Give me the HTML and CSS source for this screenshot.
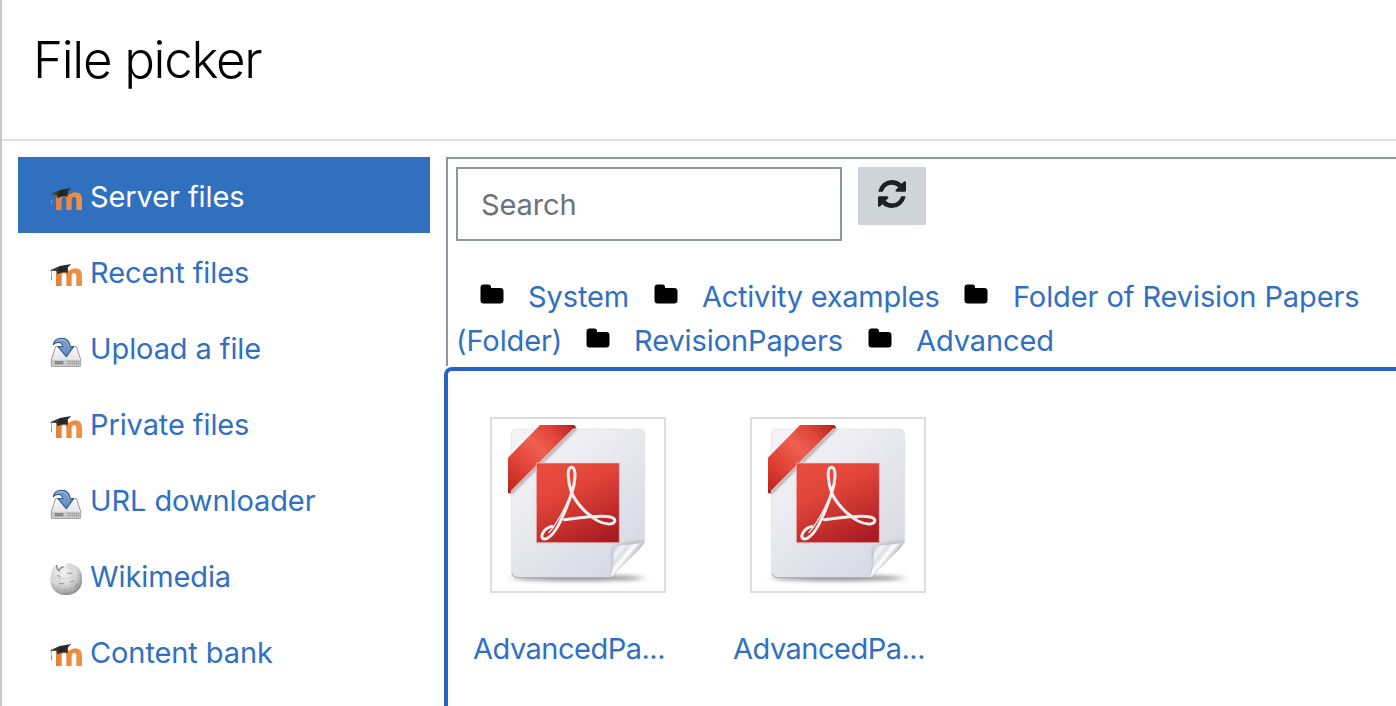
FILE: index.html
```html
<!DOCTYPE html>
<html lang="en">
<head>
<meta charset="utf-8">
<title>File picker</title>
<link rel="stylesheet" href="styles.css">
</head>
<body>
<svg class="defs" aria-hidden="true">
  <defs>
    <linearGradient id="capFill" x1="0" y1="0" x2="1" y2="0"><stop offset="0" stop-color="#555"/><stop offset=".5" stop-color="#222"/><stop offset="1" stop-color="#333"/></linearGradient>
    <linearGradient id="mFill" x1="0" y1="0" x2="1" y2="0"><stop offset="0" stop-color="#e67f3c"/><stop offset="1" stop-color="#ee9342"/></linearGradient>
    <linearGradient id="drive" x1="0" y1="0" x2="0" y2="1"><stop offset="0" stop-color="#fff"/><stop offset="1" stop-color="#d4d4d4"/></linearGradient>
    <linearGradient id="arrow" x1="0" y1="0" x2="1" y2="1"><stop offset="0" stop-color="#89abd5"/><stop offset="1" stop-color="#5f86bb"/></linearGradient>
    <radialGradient id="globe" cx=".4" cy=".3" r=".7"><stop offset="0" stop-color="#f2f2f2"/><stop offset=".6" stop-color="#d6d6d6"/><stop offset="1" stop-color="#8d8d8d"/></radialGradient>
    <linearGradient id="paper" x1="0" y1="0" x2=".8" y2="1"><stop offset="0" stop-color="#f5f5f8"/><stop offset=".4" stop-color="#ebebf1"/><stop offset="1" stop-color="#d6d7e3"/></linearGradient>
    <linearGradient id="red" x1=".2" y1="0" x2=".7" y2="1"><stop offset="0" stop-color="#e84c3d"/><stop offset=".35" stop-color="#e14438"/><stop offset="1" stop-color="#ab1e24"/></linearGradient>
    <linearGradient id="ribbon" gradientUnits="userSpaceOnUse" x1="90" y1="240" x2="270" y2="60"><stop offset="0" stop-color="#c22a23"/><stop offset=".25" stop-color="#e04335"/><stop offset=".55" stop-color="#ed6052"/><stop offset=".8" stop-color="#df4337"/><stop offset="1" stop-color="#bd2722"/></linearGradient>
    <linearGradient id="curl" gradientUnits="userSpaceOnUse" x1="395" y1="425" x2="448" y2="468"><stop offset="0" stop-color="#b9babf"/><stop offset=".35" stop-color="#f4f4f6"/><stop offset=".55" stop-color="#dedfe3"/><stop offset=".75" stop-color="#fff"/><stop offset="1" stop-color="#bcbcc2"/></linearGradient>
    <filter id="soft" x="-20%" y="-200%" width="140%" height="500%"><feGaussianBlur stdDeviation="14 7"/></filter>
    <filter id="edge" x="-10%" y="-10%" width="120%" height="120%"><feGaussianBlur stdDeviation="3"/></filter>
    <filter id="grain" x="-5%" y="-5%" width="110%" height="110%"><feGaussianBlur stdDeviation="1.6"/></filter>
  </defs>
  <symbol id="moodle" viewBox="60 267 96 96">
    <path fill="url(#mFill)" d="M78 348V312q0-15 16-17 16-2 23 8 8-8 18-8 21 0 21 21v32h-17v-31q0-8-6.500-8-7.500 0-7.500 9v30h-16v-31q0-8-6.500-8-7.500 0-7.500 9v30z"/>
    <path fill="url(#capFill)" d="M61 300l29-12 34-6-10 10-1 17q-12-6-31 4l-3-10-14-1v4z"/>
    <path fill="none" stroke="#666" stroke-width="1.5" d="M65 301q-2 9 0 20"/><path stroke="#b9826a" stroke-width="3" d="M64.500 318v13"/>
  </symbol>
  <symbol id="download" viewBox="60 45 96 96">
    <path fill="url(#drive)" stroke="#666" stroke-width="2" stroke-linejoin="round" d="M77 80h62l13 38v19q0 2-2 2H66q-2 0-2-2v-19z"/>
    <path fill="#c9c9c9" d="M66 118h85v19H66z"/><path fill="none" stroke="#fff" stroke-width="2" d="M66 117h84"/>
    <path fill="#888" d="M74 123h26v10H74z"/><path stroke="#858585" stroke-width="2" d="M115 122v12m6-12v12m6-12v12m6-12v12m6-12v12m6-12v12"/>
    <path fill="url(#arrow)" stroke="#335d95" stroke-width="3.500" stroke-linejoin="round" d="M70 74q3-19 25-19 23 0 25 25h11l-22 30-25-30h14q-1-12-11-13-9-1-17 7z"/>
    <path fill="none" stroke="#b8cdea" stroke-width="2" d="M77 66q8-8 18-8 18 0 22 24"/>
  </symbol>
  <symbol id="wiki" viewBox="60 39 96 96">
    <path fill="url(#globe)" d="M64 66q5-17 15-22l7 10 8-8 9 5 10-12q31 3 41 30 9 29-8 50-14 16-38 16-28 0-41-22-9-16-5-34z"/>
    <path fill="none" stroke="#8a8a8a" stroke-width="4" stroke-linecap="round" d="M80 46q1 14 7 16 5-10 13-12"/>
    <g fill="none" stroke="#c3c3c3" stroke-width="1.500"><path d="M64 80q45 15 90-8M66 103q40 14 88-8M91 60q-7 40 6 73M117 43q24 42 9 88M75 120q36 8 65-4"/></g>
    <g stroke="#a0a0a0" stroke-width="4" stroke-linecap="round"><path d="M83 77l7 2m24-10l10 1m-36 31h13m21-5l9-4m-28 29l5 1m30-15l5-5"/></g>
  </symbol>
  <symbol id="folder" viewBox="0 0 24 20"><path d="M3.500.5h4.800q2.700 0 2.700 2.700v.7h9.200q3.300 0 3.300 3.200v9.200q0 3.200-3.300 3.200H3.600Q.5 19.500.5 16.300V3.700Q.5.500 3.500.5z"/></symbol>
  <symbol id="pdf" viewBox="36 42 516 516">
    <ellipse cx="294" cy="519" rx="195" ry="9" fill="#555" opacity=".65" filter="url(#soft)"/>
    <g filter="url(#grain)">
      <path fill="url(#paper)" stroke="#dfe0e7" stroke-width="2" d="M111 72H477q17 0 17 17V410L394 517H111q-17 0-17-17V89q0-17 17-17z"/>
      <path fill="none" stroke="#a9a9b0" stroke-width="3" d="M96 506q4 12 15 12H394"/>
      <path fill="none" stroke="#77777f" stroke-width="6" opacity=".4" filter="url(#edge)" d="M394 515q12-42 4-80 6-18 94-24"/>
      <path fill="url(#curl)" d="M391 517q14-44 8-87 0-9 11-9 58 1 84-13-4 13-15 24l-73 72q-7 8-15 13z"/>
      <path fill="none" stroke="#555" stroke-width="8" opacity=".45" filter="url(#edge)" d="M92 266L288 70"/>
      <path fill="url(#ribbon)" d="M180 60H278q9 0 9 10H280L92 258v6H84V158z"/>
      <path fill="#a82220" d="M278 60q9 0 9 10H278l-5-6zM84 250l8 8v7h-8z"/>
      <path fill="url(#red)" stroke="#f0c4c6" stroke-width="2" d="M169 174H418V413H169z"/>
      <g fill="none" stroke="#f6eeee" stroke-linecap="round" stroke-linejoin="round">
        <path stroke-width="9" d="M275 264C264 232 259 188 274 187C291 186 286 235 275 264C257 318 226 401 193 402C178 401 186 372 215 364"/>
        <path stroke-width="9" d="M275 264C292 300 341 355 386 357C407 357 412 341 391 336C360 329 306 338 253 344"/>
        <path stroke-width="4" d="M270 274C249 323 225 362 207 383M280 277C298 305 327 328 348 340"/>
      </g>
    </g>
  </symbol>
</svg>
<div class="dialog">
  <header class="header"><h1 class="title">File picker</h1></header>
  <main class="body">
    <nav class="repos">
      <a class="repo active"><svg><use href="#moodle"/></svg><span>Server files</span></a>
      <a class="repo"><svg><use href="#moodle"/></svg><span>Recent files</span></a>
      <a class="repo"><svg><use href="#download"/></svg><span>Upload a file</span></a>
      <a class="repo"><svg><use href="#moodle"/></svg><span>Private files</span></a>
      <a class="repo"><svg><use href="#download"/></svg><span>URL downloader</span></a>
      <a class="repo"><svg><use href="#wiki"/></svg><span>Wikimedia</span></a>
      <a class="repo"><svg><use href="#moodle"/></svg><span>Content bank</span></a>
    </nav>
    <section class="panel">
      <div class="top">
        <div class="toolbar">
          <input class="search" type="text" placeholder="Search">
          <button class="refresh" aria-label="Refresh"><svg viewBox="0 0 1536 1536"><path d="M1511 928q0 5-1 7-64 268-268 434.500T764 1536q-146 0-282.500-55T238 1324l-129 129q-19 19-45 19t-45-19-19-45V960q0-26 19-45t45-19h448q26 0 45 19t19 45-19 45l-137 137q71 66 161 102t187 36q134 0 250-65t186-179q11-17 53-117 8-23 30-23h192q13 0 22.500 9.500t9.500 22.500zm25-800v448q0 26-19 45t-45 19h-448q-26 0-45-19t-19-45 19-45l138-138Q969 256 768 256q-134 0-250 65T332 500q-11 17-53 117-8 23-30 23H50q-13 0-22.500-9.500T18 608v-7q65-268 270-434.500T768 0q146 0 284 55.500T1297 212l130-129q19-19 45-19t45 19 19 45z"/></svg></button>
        </div>
        <div class="path">
          <div class="path-line"><svg><use href="#folder"/></svg><a class="c-system">System</a><svg><use href="#folder"/></svg><a class="c-activity">Activity examples</a><svg><use href="#folder"/></svg><a class="c-revision">Folder of Revision Papers</a></div>
          <div class="path-line"><a class="c-folder">(Folder)</a><svg><use href="#folder"/></svg><a class="c-papers">RevisionPapers</a><svg><use href="#folder"/></svg><a>Advanced</a></div>
        </div>
      </div>
      <div class="files">
        <a class="file"><div class="thumb"><svg><use href="#pdf"/></svg></div><span>AdvancedPa...</span></a>
        <a class="file"><div class="thumb"><svg><use href="#pdf"/></svg></div><span>AdvancedPa...</span></a>
      </div>
    </section>
  </main>
</div>
</body>
</html>
```

FILE: styles.css
```css
* { box-sizing: border-box; }
body { margin: 0; background: #fff; font: 400 29px/44px Inter, "Liberation Sans", sans-serif; letter-spacing: -0.1px; overflow: hidden; }
a { color: #3170bf; white-space: nowrap; }
svg { display: block; flex: none; }
.defs { position: absolute; width: 0; height: 0; }
.dialog { height: 706px; border-left: 2px solid #c8c8c8; overflow: hidden; }
.header { height: 141px; padding: 30px 0 0 31px; border-bottom: 2px solid #dee2e6; }
.title { margin: 0; font-size: 51px; font-weight: 300; line-height: 60px; letter-spacing: -1.3px; color: #000; }
.body { display: flex; padding: 16px 0 0 16px; }
.repos { width: 412px; flex: none; }
.repo { display: flex; align-items: flex-start; height: 76px; padding: 18px 0 0 32px; }
.repo svg { width: 32px; height: 32px; margin: 8px 8px 0 0; }
.active { background: #3170bf; color: #fff; }
.panel { flex: none; width: 966px; margin-left: 14px; }
.top { height: 209px; margin-left: 2px; padding: 8px 0 0 8px; border: 2px solid #8f959e; border-width: 2px 0 0 2px; }
.toolbar { display: flex; align-items: flex-start; gap: 16px; height: 108px; }
.search { width: 386px; height: 74px; padding: 0 23px; border: 2px solid #8f959e; border-radius: 0; background: #fff; font: inherit; letter-spacing: inherit; }
.search::placeholder { color: #6a737b; opacity: 1; }
.refresh { display: flex; align-items: flex-start; justify-content: center; width: 68px; height: 58px; padding: 13px 1px 0 0; border: 0; background: #ced4da; }
.refresh svg { width: 28px; height: 28px; fill: #1d2125; }
.path-line { display: flex; height: 44px; }
.path-line svg { width: 24px; height: 20px; margin: 9px 24px 0; }
.c-system { width: 102px; }
.c-activity { width: 238px; letter-spacing: -0.25px; }
.c-revision { margin-left: 1px; }
.c-folder { width: 106px; }
.c-papers { width: 210px; }
.files { display: flex; gap: 64px; height: 400px; margin-top: 1px; padding: 46px 0 0 25px; border: 4px solid #2762c6; border-width: 4px 0 0 4px; border-top-left-radius: 8px; }
.file { width: 196px; letter-spacing: -0.5px; }
.thumb { width: 176px; height: 176px; margin: 0 0 34px 17px; border: 2px solid #ddd; }
.thumb svg { width: 172px; height: 172px; }
```
